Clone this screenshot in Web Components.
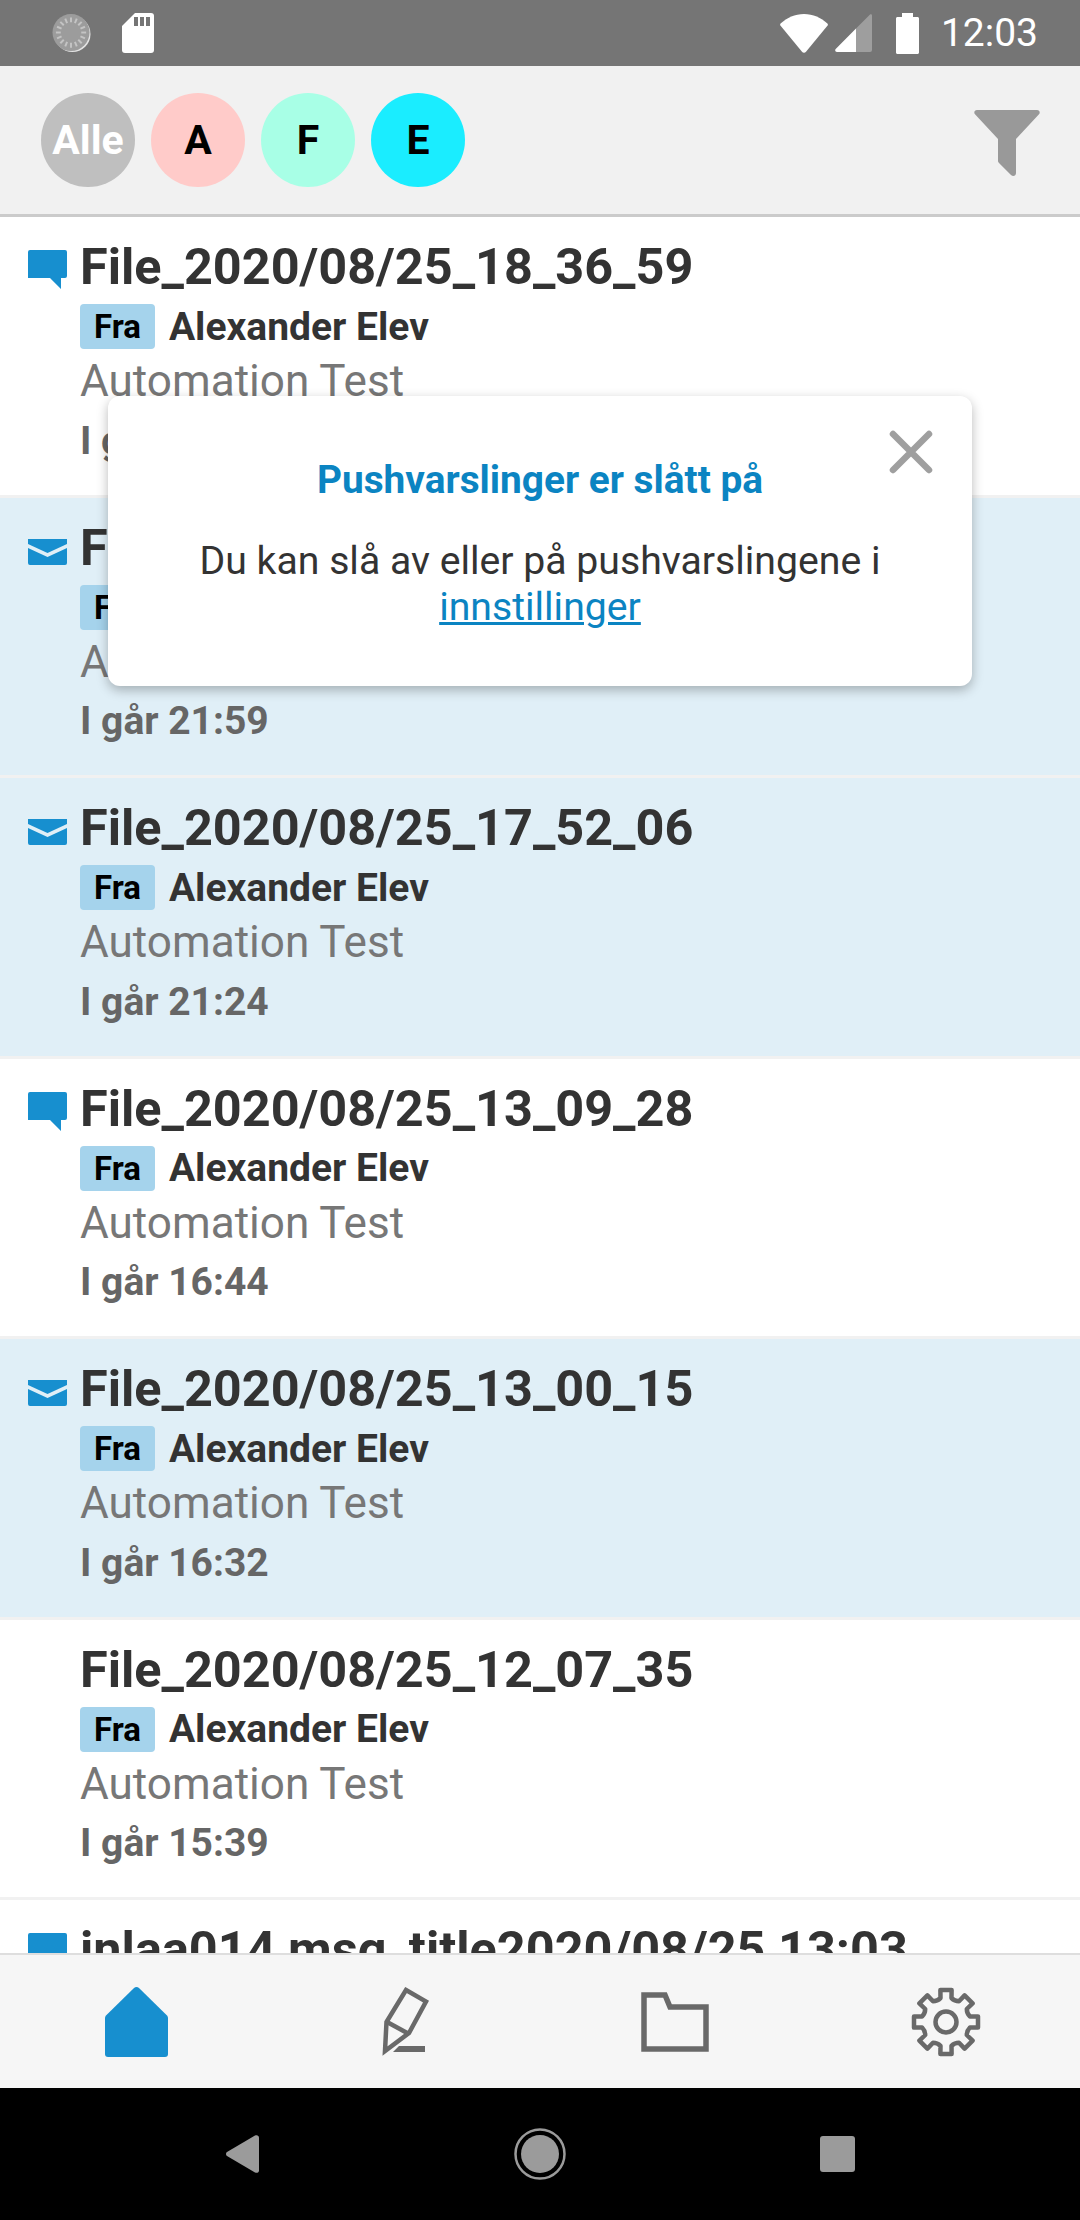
<!DOCTYPE html>
<html>
<head>
<meta charset="utf-8">
<style>
html, body { margin: 0; padding: 0; height: 2220px; overflow: hidden; background: #fff; font-family: Roboto, "Liberation Sans", sans-serif; }
#app { display: flex; flex-direction: column; height: 2220px; position: relative; }
</style>
</head>
<body>
<div id="app">
  <status-bar time="12:03"></status-bar>
  <filter-bar>
    <filter-chip bg="#bfbfbf" fg="#fff">Alle</filter-chip>
    <filter-chip bg="#ffcbc9" fg="#000">A</filter-chip>
    <filter-chip bg="#a8ffe6" fg="#000">F</filter-chip>
    <filter-chip bg="#1aedff" fg="#000">E</filter-chip>
  </filter-bar>
  <message-list>
    <message-row kind="chat" title="File_2020/08/25_18_36_59" sender="Alexander Elev" subject="Automation Test" time="I går 22:36"></message-row>
    <message-row kind="mail" title="File_2020/08/25_18_01_13" sender="Alexander Elev" subject="Automation Test" time="I går 21:59"></message-row>
    <message-row kind="mail" title="File_2020/08/25_17_52_06" sender="Alexander Elev" subject="Automation Test" time="I går 21:24"></message-row>
    <message-row kind="chat" title="File_2020/08/25_13_09_28" sender="Alexander Elev" subject="Automation Test" time="I går 16:44"></message-row>
    <message-row kind="mail" title="File_2020/08/25_13_00_15" sender="Alexander Elev" subject="Automation Test" time="I går 16:32"></message-row>
    <message-row kind="none" title="File_2020/08/25_12_07_35" sender="Alexander Elev" subject="Automation Test" time="I går 15:39"></message-row>
    <message-row kind="chat" title="inlaa014 msg_title2020/08/25 13:03" sender="Alexander Elev" subject="Automation Test" time="I går 13:03"></message-row>
  </message-list>
  <tab-bar></tab-bar>
  <nav-bar></nav-bar>
  <notice-dialog heading="Pushvarslinger er slått på" link="innstillinger">Du kan slå av eller på pushvarslingene i</notice-dialog>
</div>
<script>
class StatusBar extends HTMLElement {
  connectedCallback() {
    const root = this.attachShadow({ mode: "open" });
    const ticks = [];
    for (let i = 0; i < 16; i++) {
      ticks.push(`<line x1="19.5" y1="4" x2="19.5" y2="9" transform="rotate(${i * 22.5} 19.5 19.5)"/>`);
    }
    root.innerHTML = `
<style>
:host { display: flex; flex: none; align-items: center; height: 66px; background: #757575; color: #fff; box-sizing: border-box; padding: 0 42px 0 52px; }
svg { display: block; flex: none; }
.sd { margin-left: 31px; }
.spacer { flex: 1; }
.signal { margin-left: 7px; }
.battery { margin-left: 24px; }
.time { margin-left: 22px; font: 400 39px Roboto, sans-serif; line-height: 66px; }
</style>
<svg width="39" height="40" viewBox="0 0 40 40"><circle cx="21" cy="21" r="18.5" fill="#fff" opacity=".8"/><circle cx="19.5" cy="19.5" r="19" fill="#9c9c9c"/><g stroke="#c4c4c4" stroke-width="2">${ticks.join("")}</g></svg>
<svg class="sd" width="32" height="40" viewBox="0 0 32 40"><path fill="#fff" d="M13 0H29a3 3 0 0 1 3 3V37a3 3 0 0 1-3 3H3a3 3 0 0 1-3-3V13Z"/><path fill="#757575" d="M12 4h4v9h-4zM18 4h4v9h-4zM24 4h4v9h-4z"/></svg>
<span class="spacer"></span>
<svg width="48" height="39" viewBox="0 0 48 39"><path fill="#fff" d="M0.6 9.6C7 3.6 15 0 24 0s17 3.6 23.4 9.6c.6.6.6 1.4.2 2L26 37.8c-1 1.2-3 1.2-4 0L.4 11.6c-.4-.6-.4-1.400.2-2Z"/></svg>
<svg class="signal" width="37" height="38" viewBox="0 0 37 38"><path fill="#9e9e9e" d="M35 .6c.8-.8 2-.3 2 .8V36a2 2 0 0 1-2 2H21V14.600Z"/><path fill="#fff" d="M21 14.600V38H2c-1.600 0-2.400-1.800-1.300-2.900Z"/></svg>
<svg class="battery" width="23" height="41" viewBox="0 0 23 41"><path fill="#fff" d="M6 0h11v4h4.500c.8 0 1.500.7 1.500 1.500V39.500c0 .8-.7 1.500-1.500 1.500H1.500C.7 41 0 40.300 0 39.500V5.500C0 4.700.7 4 1.500 4H6Z"/></svg>
<span class="time">${this.getAttribute("time")}</span>`;
  }
}
customElements.define("status-bar", StatusBar);

class FilterChip extends HTMLElement {
  connectedCallback() {
    const root = this.attachShadow({ mode: "open" });
    root.innerHTML = `
<style>
:host { display: flex; flex: none; align-items: center; justify-content: center; width: 94px; height: 94px; border-radius: 50%; font: 700 41px Roboto, sans-serif; background: ${this.getAttribute("bg")}; color: ${this.getAttribute("fg")}; }
</style>
<slot></slot>`;
  }
}
customElements.define("filter-chip", FilterChip);

class FilterBar extends HTMLElement {
  connectedCallback() {
    const root = this.attachShadow({ mode: "open" });
    root.innerHTML = `
<style>
:host { display: flex; flex: none; align-items: center; gap: 16px; box-sizing: border-box; height: 151px; padding: 0 40px 0 41px; background: #f1f1f1; border-bottom: 3px solid #cbcbcb; }
svg { margin: 6px 0 0 auto; display: block; }
</style>
<slot></slot>
<svg width="66" height="67" viewBox="0 0 66 67"><path fill="#999" d="M3 0H63c2.500 0 3.500 2.600 2 4.300L42 29V63c0 3-3 4-5 2L25 53c-1-1-1-1.500-1-3V29L1 4.300C-.5 2.600.5 0 3 0Z"/></svg>`;
  }
}
customElements.define("filter-bar", FilterBar);

const KIND_ICONS = {
  chat: `<svg width="39" height="39" viewBox="0 0 39 39"><path fill="#178fcf" d="M2 0H37a2 2 0 0 1 2 2V26a2 2 0 0 1-2 2H33V39L22 28H0V2a2 2 0 0 1 2-2Z"/></svg>`,
  mail: `<svg width="39" height="27" viewBox="0 0 39 27"><path fill="#178fcf" d="M0 1H39V6L19.500 15 0 6Z"/><path fill="#178fcf" d="M0 10L19.500 19 39 10V25a2 2 0 0 1-2 2H2a2 2 0 0 1-2-2Z"/></svg>`,
  none: ``
};

class MessageRow extends HTMLElement {
  connectedCallback() {
    const root = this.attachShadow({ mode: "open" });
    const kind = this.getAttribute("kind");
    root.innerHTML = `
<style>
:host { display: flex; flex: none; box-sizing: border-box; height: 280.5px; padding: 22px 0 0 28px; border-bottom: 3px solid #f1f1f1; background: ${kind === "mail" ? "#e0eff7" : "#fff"}; color: #333; }
.icon { flex: none; width: 39px; height: 39px; margin: ${kind === "mail" ? 18 : 11}px 13px 0 0; }
.icon svg { display: block; }
.body { display: flex; flex-direction: column; min-width: 0; }
.title { font: 700 50.4px/56px Roboto, sans-serif; white-space: nowrap; }
.from { display: flex; align-items: center; gap: 14px; margin-top: 8.5px; height: 46px; font: 700 39px Roboto, sans-serif; }
.tag { background: #a5d3ec; color: #000; border-radius: 4px; padding: 0 14px; font: 700 33px/45px Roboto, sans-serif; }
.subject { font: 400 44.1px/52px Roboto, sans-serif; color: #777; margin-top: 5.5px; }
.time { font: 700 39px/42px Roboto, sans-serif; color: #666; margin-top: 12.5px; }
</style>
<div class="icon">${KIND_ICONS[kind]}</div>
<div class="body">
  <div class="title">${this.getAttribute("title")}</div>
  <div class="from"><span class="tag">Fra</span><span>${this.getAttribute("sender")}</span></div>
  <div class="subject">${this.getAttribute("subject")}</div>
  <div class="time">${this.getAttribute("time")}</div>
</div>`;
  }
}
customElements.define("message-row", MessageRow);

class MessageList extends HTMLElement {
  connectedCallback() {
    const root = this.attachShadow({ mode: "open" });
    root.innerHTML = `
<style>
:host { display: flex; flex-direction: column; flex: 1; min-height: 0; overflow: hidden; }
</style>
<slot></slot>`;
  }
}
customElements.define("message-list", MessageList);

// eight rounded teeth around (cx, cy)
function gearPath(cx, cy) {
  const pt = (r, deg) => {
    const a = (deg * Math.PI) / 180;
    return (cx + r * Math.cos(a)).toFixed(1) + " " + (cy + r * Math.sin(a)).toFixed(1);
  };
  let d = "";
  for (let i = 0; i < 8; i++) {
    const a = i * 45 - 90;
    d += (i ? "L" : "M") + pt(24.5, a - 13) + "L" + pt(32.5, a - 10) + "L" + pt(32.5, a + 10) + "L" + pt(24.5, a + 13);
    d += "Q" + pt(22.5, a + 22.5) + " " + pt(24.5, a + 32);
  }
  return d + "Z";
}

class TabBar extends HTMLElement {
  connectedCallback() {
    const root = this.attachShadow({ mode: "open" });
    root.innerHTML = `
<style>
:host { display: grid; flex: none; grid-template-columns: repeat(4, 1fr); align-items: center; justify-items: center; box-sizing: border-box; height: 135px; background: #f6f6f6; border-top: 2px solid #dedede; }
svg { display: block; }
.home { margin-left: 3px; }
.gear { margin-left: 2px; }
</style>
<svg class="home" width="63" height="70" viewBox="0 0 63 70"><path fill="#178fcf" d="M29 1c1.400-1.300 3.600-1.300 5 0L62 28.500c.7.7 1 1.500 1 2.500V67a3 3 0 0 1-3 3H3a3 3 0 0 1-3-3V31c0-1 .3-1.800 1-2.500Z"/></svg>
<svg width="50" height="70" viewBox="0 0 50 70" fill="none" stroke="#696969" stroke-width="4.500"><path d="M26 3L46 14.500 29 46 5 64 6.500 35Z"/><path d="M7 35L29 47"/><path d="M13 65L19 59H45V65Z" fill="#696969" stroke="none"/></svg>
<svg width="68" height="60" viewBox="0 0 68 60" fill="none" stroke="#696969" stroke-width="5.500"><path d="M3 3H24L29 15H65V57H3Z"/></svg>
<svg class="gear" width="70" height="70" viewBox="0 0 70 70" fill="none" stroke="#696969" stroke-width="4.500" stroke-linejoin="round"><path d="${gearPath(35, 35)}"/><circle cx="35" cy="35" r="10.500"/></svg>`;
  }
}
customElements.define("tab-bar", TabBar);

class NavBar extends HTMLElement {
  connectedCallback() {
    const root = this.attachShadow({ mode: "open" });
    root.innerHTML = `
<style>
:host { display: flex; flex: none; align-items: center; box-sizing: border-box; height: 132px; padding: 0 225px 0 226px; justify-content: space-between; background: #000; }
svg { display: block; }
</style>
<svg width="33" height="38" viewBox="0 0 33 38"><path fill="#9b9b9b" d="M1 17L29 .6c2-1 4 0 4 2V35.400c0 2-2 3-4 2L1 21c-1.300-.8-1.300-3.200 0-4Z"/></svg>
<svg width="52" height="52" viewBox="0 0 52 52"><circle cx="26" cy="26" r="24.500" fill="none" stroke="#9b9b9b" stroke-width="2.500"/><circle cx="26" cy="26" r="19" fill="#9b9b9b"/></svg>
<svg width="35" height="36" viewBox="0 0 35 36"><rect width="35" height="36" rx="3" fill="#9b9b9b"/></svg>`;
  }
}
customElements.define("nav-bar", NavBar);

class NoticeDialog extends HTMLElement {
  connectedCallback() {
    const root = this.attachShadow({ mode: "open" });
    root.innerHTML = `
<style>
:host { position: absolute; left: 108px; top: 396px; width: 864px; height: 290px; box-sizing: border-box; display: block; padding: 62px 30px 0; background: #fff; border-radius: 12px; box-shadow: 0 4px 12px rgba(0,0,0,.28); text-align: center; color: #333; font-family: Roboto, sans-serif; }
h2 { margin: 0; font: 700 38.8px/44px Roboto, sans-serif; color: #0b84c2; }
p { margin: 36px 0 0; font: 400 39.2px/46px Roboto, sans-serif; }
a { color: #0b84c2; text-decoration: underline; }
svg { position: absolute; right: 39px; top: 34px; display: block; }
</style>
<svg width="44" height="44" viewBox="0 0 44 44"><path d="M4 4L40 40M40 4L4 40" stroke="#9f9f9f" stroke-width="6.500" stroke-linecap="round"/></svg>
<h2>${this.getAttribute("heading")}</h2>
<p><slot></slot><br><a href="#">${this.getAttribute("link")}</a></p>`;
  }
}
customElements.define("notice-dialog", NoticeDialog);
</script>
</body>
</html>
